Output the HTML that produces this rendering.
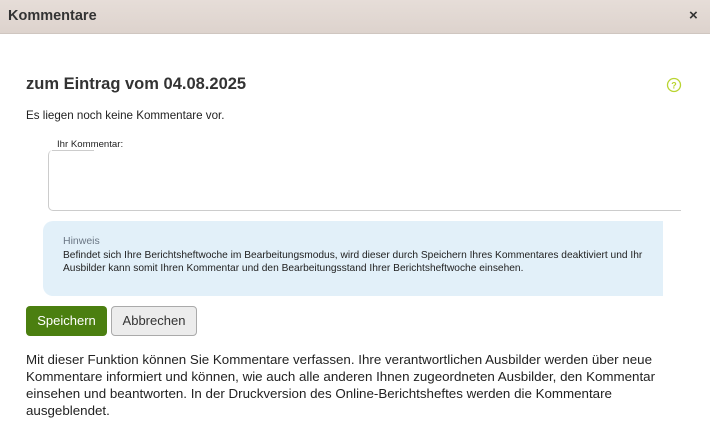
<!DOCTYPE html>
<html><head><meta charset="utf-8"><style>
*{margin:0;padding:0;box-sizing:border-box}
body{width:710px;height:430px;overflow:hidden;background:#fff;font-family:"Liberation Sans",sans-serif;color:#222;position:relative}
.hdr{position:absolute;left:0;top:0;width:710px;height:34px;background:linear-gradient(#e6ddd8,#ddd3cd);border-bottom:1px solid #cfc6c0}
.hdr .t{position:absolute;left:8px;top:8px;font-size:14.5px;font-weight:bold;color:#333}
.hdr .x{position:absolute;left:689px;top:7px;font-size:15px;font-weight:bold;color:#333}
.a{position:absolute;white-space:nowrap}
</style></head><body>
<div class="hdr"><div class="t">Kommentare</div><div class="x">×</div></div>
<div class="a" style="left:26px;top:75px;font-size:16.5px;font-weight:bold;color:#333">zum Eintrag vom 04.08.2025</div>
<svg class="a" style="left:666px;top:77px" width="16" height="16"><circle cx="8" cy="8" r="6.5" fill="none" stroke="#b9d431" stroke-width="1.3"/><text x="8" y="11.5" font-size="9" font-weight="bold" text-anchor="middle" fill="#b9d431" font-family="Liberation Sans">?</text></svg>
<div class="a" style="left:26px;top:109px;font-size:11.6px">Es liegen noch keine Kommentare vor.</div>
<div class="a" style="left:57px;top:139px;font-size:9.6px">Ihr Kommentar:</div>
<div class="a" style="left:48px;top:150px;width:633px;height:61px;border:1px solid #ccc;border-right:none;border-top:none;border-radius:5px 0 0 5px"></div>
<div class="a" style="left:52px;top:150px;width:42px;height:1px;background:#ccc"></div>
<div class="a" style="left:43px;top:221px;width:620px;height:75px;background:#e2f0f9;border-radius:10px 0 0 10px"></div>
<div class="a" style="left:63px;top:235px;font-size:10.5px;color:#6a7684">Hinweis</div>
<div class="a" style="left:63px;top:249px;font-size:10.2px;line-height:13px;color:#222">Befindet sich Ihre Berichtsheftwoche im Bearbeitungsmodus, wird dieser durch Speichern Ihres Kommentares deaktiviert und Ihr<br>Ausbilder kann somit Ihren Kommentar und den Bearbeitungsstand Ihrer Berichtsheftwoche einsehen.</div>
<div class="a" style="left:26px;top:306px;width:81px;height:30px;background:#4b7f10;border-radius:4px;color:#fff;font-size:13px;text-align:center;line-height:30px">Speichern</div>
<div class="a" style="left:111px;top:306px;width:86px;height:30px;background:#ececec;border:1px solid #aaa;border-radius:4px;color:#333;font-size:13px;text-align:center;line-height:28px">Abbrechen</div>
<div class="a" style="left:26px;top:351px;font-size:13.35px;line-height:17px;color:#222">Mit dieser Funktion können Sie Kommentare verfassen. Ihre verantwortlichen Ausbilder werden über neue<br>Kommentare informiert und können, wie auch alle anderen Ihnen zugeordneten Ausbilder, den Kommentar<br>einsehen und beantworten. In der Druckversion des Online-Berichtsheftes werden die Kommentare<br>ausgeblendet.</div>
</body></html>
